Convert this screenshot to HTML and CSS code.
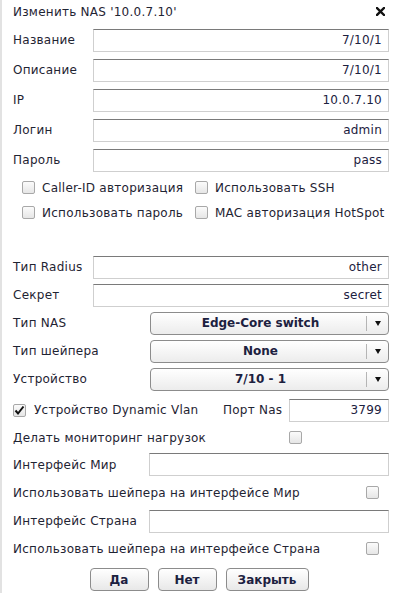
FILE: index.html
```html
<!DOCTYPE html>
<html lang="ru">
<head>
    <meta charset="UTF-8">
    <title>Изменить NAS</title>
    <link rel="stylesheet" href="styles.css">
</head>
<body>
<div class="dialog">
    <div class="head">
        <span class="title">Изменить NAS '10.0.7.10'</span>
        <svg class="close" width="9" height="9" viewBox="0 0 9 9">
            <path d="M1 1L8 8M8 1L1 8" stroke="#111" stroke-width="2.4" stroke-linecap="square"/>
        </svg>
    </div>

    <div class="row"><label>Название</label><div class="field">7/10/1</div></div>
    <div class="row"><label>Описание</label><div class="field">7/10/1</div></div>
    <div class="row"><label>IP</label><div class="field">10.0.7.10</div></div>
    <div class="row"><label>Логин</label><div class="field">admin</div></div>
    <div class="row"><label>Пароль</label><div class="field">pass</div></div>

    <div class="checks">
        <div class="check"><span class="cb"></span>Caller-ID авторизация</div>
        <div class="check"><span class="cb"></span>Использовать SSH</div>
        <div class="check"><span class="cb"></span>Использовать пароль</div>
        <div class="check"><span class="cb"></span>MAC авторизация HotSpot</div>
    </div>

    <div class="row row-s first"><label>Тип Radius</label><div class="field">other</div></div>
    <div class="row row-s"><label>Секрет</label><div class="field">secret</div></div>
    <div class="row row-s"><label class="wide">Тип NAS</label><div class="select"><span>Edge-Core switch</span><i></i></div></div>
    <div class="row row-s"><label class="wide">Тип шейпера</label><div class="select"><span>None</span><i></i></div></div>
    <div class="row row-s"><label class="wide">Устройство</label><div class="select"><span>7/10 - 1</span><i></i></div></div>

    <div class="row vlan">
        <div class="check-inline"><span class="cb checked">
            <svg width="11" height="11" viewBox="0 0 11 11"><path d="M1.5 5.5L4 8.5L9.5 1.5" fill="none" stroke="#111" stroke-width="2"/></svg>
        </span>Устройство Dynamic Vlan</div>
        <label class="port">Порт Nas</label>
        <div class="field port-field">3799</div>
    </div>
    <div class="row row-t"><label class="mon">Делать мониторинг нагрузок</label><span class="cb"></span></div>
    <div class="row row-t"><label class="wide2">Интерфейс Мир</label><div class="field"></div></div>
    <div class="row row-u"><label class="long">Использовать шейпера на интерфейсе Мир</label><span class="cb"></span></div>
    <div class="row row-s"><label class="wide2">Интерфейс Страна</label><div class="field"></div></div>
    <div class="row row-t"><label class="long">Использовать шейпера на интерфейсе Страна</label><span class="cb"></span></div>

    <div class="buttons">
        <button class="btn">Да</button>
        <button class="btn">Нет</button>
        <button class="btn btn-wide">Закрыть</button>
    </div>
</div>
</body>
</html>
```

FILE: styles.css
```css
html,
body {
    margin: 0;
    padding: 0;
    background: #ffffff;
}

body {
    font: 12px "DejaVu Sans", Verdana, sans-serif;
    letter-spacing: 0.25px;
    color: #1f2433;
}

.dialog {
    border-left: 2px solid #e2e2e2;
    height: 593px;
    box-sizing: border-box;
    padding: 0 8px 0 11px;
}

.head {
    height: 25px;
    display: flex;
    align-items: center;
    justify-content: space-between;
}
.title {
    margin-top: -1px;
}
.close {
    margin-right: 4px;
    margin-top: -2px;
}

.row {
    height: 30px;
    display: flex;
    align-items: center;
}
.row-s {
    height: 28px;
}
.row-t {
    height: 27px;
}
.row-u {
    height: 29px;
}
.row.first {
    margin-top: 28px;
}

label {
    width: 80px;
    flex: none;
}
label.wide {
    width: 137px;
}
label.wide2 {
    width: 136px;
}
label.mon {
    width: 276px;
}
label.long {
    width: 353px;
}

.field {
    flex: 1;
    height: 23px;
    box-sizing: border-box;
    border: 1px solid #cfcfcf;
    border-top-color: #7a7a7a;
    padding: 0 6px;
    line-height: 21px;
    text-align: right;
    color: #1c2140;
}

.checks {
    display: grid;
    grid-template-columns: 173px auto;
    grid-auto-rows: 25px;
    padding-left: 9px;
}
.check,
.check-inline {
    display: flex;
    align-items: center;
}

.cb {
    width: 13px;
    height: 13px;
    box-sizing: border-box;
    border: 1px solid #a8a8a8;
    border-radius: 2px;
    background: linear-gradient(#fbfbfb, #e6e6e6);
    margin-right: 7px;
    flex: none;
    display: flex;
    align-items: center;
    justify-content: center;
}
.check-inline .cb {
    margin-right: 8px;
}

.select {
    flex: 1;
    height: 23px;
    box-sizing: border-box;
    border: 1px solid #8c8c8c;
    border-radius: 4px;
    background: linear-gradient(#ffffff, #ececec);
    display: flex;
    align-items: center;
    font-weight: bold;
    letter-spacing: 0;
    color: #1c2140;
}
.select span {
    flex: 1;
    text-align: center;
    padding-left: 4px;
}
.select i {
    width: 21px;
    height: 15px;
    border-left: 1px solid #b5b5b5;
    position: relative;
}
.select i:after {
    content: "";
    position: absolute;
    left: 8px;
    top: 5px;
    border-left: 3.5px solid transparent;
    border-right: 3.5px solid transparent;
    border-top: 5px solid #111;
}

.vlan {
    height: 28px;
    margin-top: 3px;
}
.check-inline {
    width: 210px;
}
label.port {
    width: 66px;
}
.port-field {
    flex: none;
    width: 100px;
}

.buttons {
    display: flex;
    justify-content: center;
    gap: 9px;
    margin-top: 6px;
    padding-right: 4px;
}
.btn {
    width: 59px;
    height: 23px;
    font: bold 12px "DejaVu Sans", Verdana, sans-serif;
    color: #1c2140;
    border: 1px solid #8c8c8c;
    border-radius: 4px;
    background: linear-gradient(#ffffff, #e8e8e8);
    padding: 0;
}
.btn-wide {
    width: 83px;
}
```
